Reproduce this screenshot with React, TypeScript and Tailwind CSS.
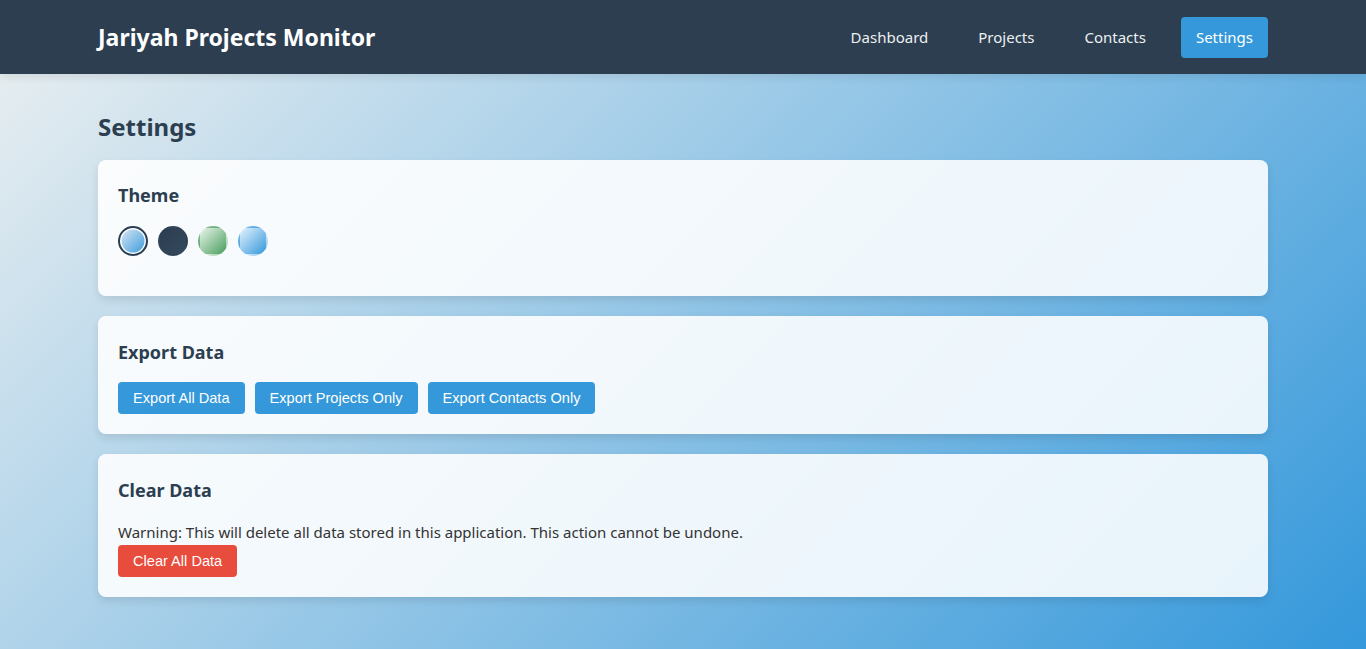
import { useState } from "react";

const navLinks = ["Dashboard", "Projects", "Contacts", "Settings"];

const themes = [
  { id: "light", bg: "bg-[linear-gradient(135deg,#e0eaf5_0%,#3498db_100%)]" },
  { id: "dark", bg: "bg-[linear-gradient(135deg,#2c3e50_0%,#34495e_100%)]" },
  { id: "green", bg: "bg-[linear-gradient(135deg,#e8f5e9_0%,#4a9d5f_100%)]" },
  { id: "blue", bg: "bg-[linear-gradient(135deg,#e3f2fd_0%,#3498db_100%)]" },
];

const App = () => {
  const [theme, setTheme] = useState("light");

  return (
    <div className="min-h-screen bg-[linear-gradient(135deg,#ecf0f1_0%,#3498db_100%)] bg-fixed text-[#333] font-['Noto_Sans',sans-serif] leading-[1.6]">
      {/* HEADER */}
      <header className="bg-[#2c3e50] shadow-[0_2px_10px_rgba(0,0,0,0.1)]">
        <div className="mx-auto max-w-[1200px] px-[15px] h-[74px] flex items-center justify-between">
          <h1 className="text-[23px] font-bold text-white">Jariyah Projects Monitor</h1>
          <nav className="flex gap-[20px]">
            {navLinks.map((link) => (
              <a
                key={link}
                href="#"
                className={`h-[41px] flex items-center px-[15px] rounded-[4px] text-[15px] text-[#ecf0f1] ${
                  link === "Settings" ? "bg-[#3498db] text-white" : ""
                }`}
              >
                {link}
              </a>
            ))}
          </nav>
        </div>
      </header>

      {/* MAIN */}
      <main className="mx-auto max-w-[1200px] px-[15px] pt-[37px] pb-[40px]">
        <h2 className="text-[24px] leading-[32px] font-bold text-[#2c3e50] mb-[17px]">Settings</h2>

        <div className="flex flex-col gap-[20px]">
          {/* THEME */}
          <section className="rounded-[8px] p-[20px] bg-[rgba(255,255,255,0.88)] shadow-[0_4px_8px_rgba(0,0,0,0.1)]">
            <h3 className="pt-[1px] text-[18px] font-bold text-[#2c3e50] mb-[16px]">Theme</h3>
            <div className="flex gap-[10px] mb-[20px]">
              {themes.map((t) => (
                <button
                  key={t.id}
                  onClick={() => setTheme(t.id)}
                  className={`w-[30px] h-[30px] rounded-full cursor-pointer ${t.bg} ${
                    theme === t.id
                      ? "border-2 border-[#2c3e50] shadow-[inset_0_0_0_1.5px_white]"
                      : "border-2 border-transparent"
                  }`}
                />
              ))}
            </div>
          </section>

          {/* EXPORT */}
          <section className="rounded-[8px] p-[20px] bg-[rgba(255,255,255,0.88)] shadow-[0_4px_8px_rgba(0,0,0,0.1)]">
            <h3 className="pt-[2px] text-[18px] font-bold text-[#2c3e50] mb-[15px]">Export Data</h3>
            <div className="flex gap-[10px]">
              {["Export All Data", "Export Projects Only", "Export Contacts Only"].map((label) => (
                <button
                  key={label}
                  className="h-[32px] pt-[2px] px-[15px] rounded-[4px] bg-[#3498db] text-white text-[14.6px] font-['Liberation_Sans',Arial,sans-serif]"
                >
                  {label}
                </button>
              ))}
            </div>
          </section>

          {/* CLEAR */}
          <section className="rounded-[8px] p-[20px] bg-[rgba(255,255,255,0.88)] shadow-[0_4px_8px_rgba(0,0,0,0.1)]">
            <h3 className="pt-[2px] text-[18px] font-bold text-[#2c3e50] mb-[17px]">Clear Data</h3>
            <p className="text-[15px] leading-[23.6px] text-[#333]">
              Warning: This will delete all data stored in this application. This action cannot be undone.
            </p>
            <button className="h-[32px] pt-[2px] px-[15px] rounded-[4px] bg-[#e74c3c] text-white text-[14.6px] font-['Liberation_Sans',Arial,sans-serif]">
              Clear All Data
            </button>
          </section>
        </div>
      </main>
    </div>
  );
};

export default App;
